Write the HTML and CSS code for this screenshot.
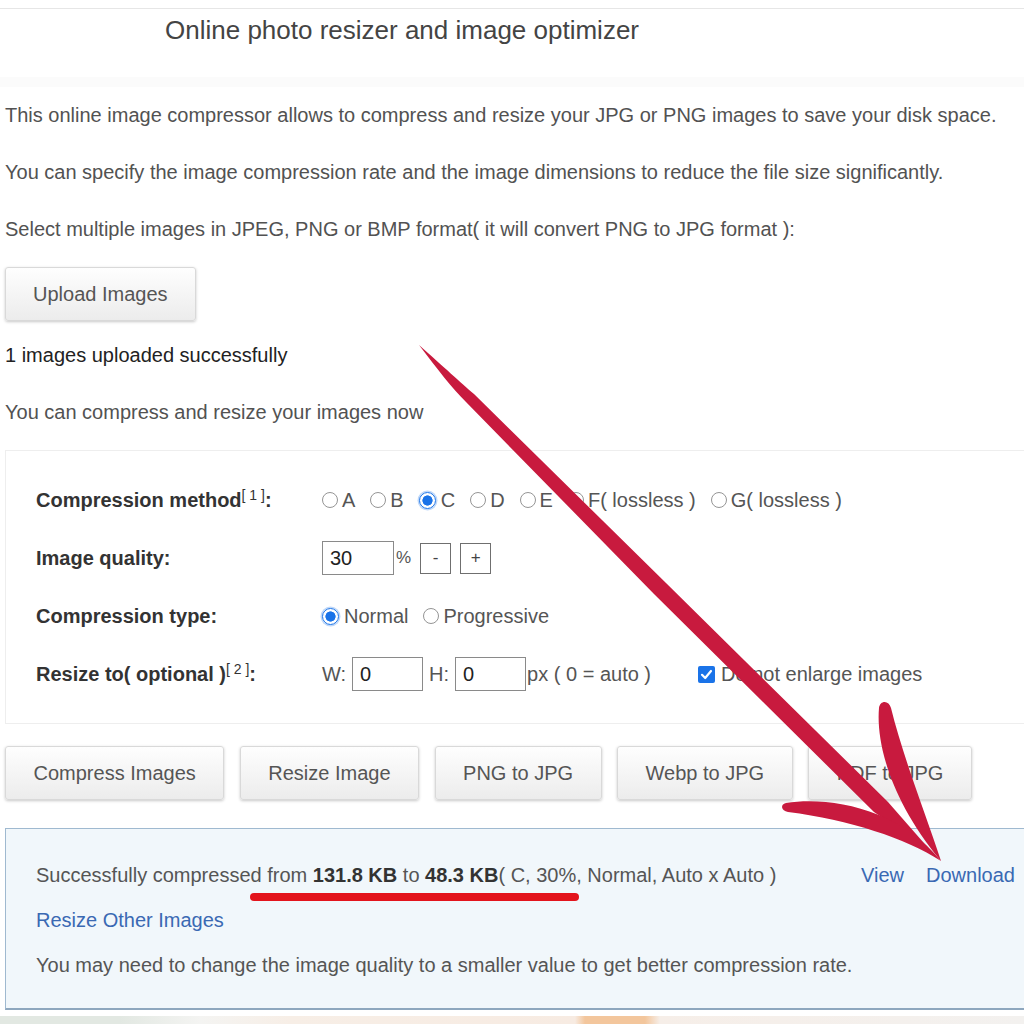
FILE: index.html
```html
<!DOCTYPE html>
<html lang="en">
<head>
<meta charset="utf-8">
<title>Online photo resizer and image optimizer</title>
<link rel="stylesheet" href="styles.css">
</head>
<body>
<header class="hdr">
  <h1>Online photo resizer and image optimizer</h1>
</header>
<main class="content">
  <p class="intro">This online image compressor allows to compress and resize your JPG or PNG images to save your disk space.</p>
  <p class="intro">You can specify the image compression rate and the image dimensions to reduce the file size significantly.</p>
  <p class="intro last">Select multiple images in JPEG, PNG or BMP format( it will convert PNG to JPG format ):</p>
  <button class="btn upload">Upload Images</button>
  <p class="status">1 images uploaded successfully</p>
  <p class="note">You can compress and resize your images now</p>

  <section class="panel">
    <div class="lbl">Compression method<sup>[ 1 ]</sup>:</div>
    <div class="ctl">
      <label class="opt"><input type="radio" name="m">A</label>
      <label class="opt"><input type="radio" name="m">B</label>
      <label class="opt"><input type="radio" name="m" checked>C</label>
      <label class="opt"><input type="radio" name="m">D</label>
      <label class="opt"><input type="radio" name="m">E</label>
      <label class="opt"><input type="radio" name="m">F( lossless )</label>
      <label class="opt"><input type="radio" name="m">G( lossless )</label>
    </div>

    <div class="lbl">Image quality:</div>
    <div class="ctl">
      <input class="field q" type="text" value="30">
      <span class="pct">%</span>
      <button class="step">-</button>
      <button class="step plus">+</button>
    </div>

    <div class="lbl">Compression type:</div>
    <div class="ctl">
      <label class="opt"><input type="radio" name="t" checked>Normal</label>
      <label class="opt"><input type="radio" name="t">Progressive</label>
    </div>

    <div class="lbl">Resize to( optional )<sup>[ 2 ]</sup>:</div>
    <div class="ctl">
      <span class="dimlbl">W:</span>
      <input class="field dim" type="text" value="0">
      <span class="dimlbl">H:</span>
      <input class="field dim last" type="text" value="0">
      <span class="px">px ( 0 = auto )</span>
      <span class="cb"><svg viewBox="0 0 17 17" width="17" height="17"><path d="M4 8.8 L7.2 12 L13 5" fill="none" stroke="#fff" stroke-width="2.2" stroke-linecap="round" stroke-linejoin="round"/></svg></span>
      <span class="cbtext">Do not enlarge images</span>
    </div>
  </section>

  <div class="actions">
    <button class="btn">Compress Images</button>
    <button class="btn">Resize Image</button>
    <button class="btn">PNG to JPG</button>
    <button class="btn">Webp to JPG</button>
    <button class="btn">PDF to JPG</button>
  </div>

  <section class="result">
    <div class="rline">
      <span>Successfully compressed from <b>131.8 KB</b> to <b>48.3 KB</b>( C, 30%, Normal, Auto x Auto )</span>
      <span class="links"><a href="#">View</a><a href="#">Download</a></span>
    </div>
    <div class="rline"><a href="#">Resize Other Images</a></div>
    <div class="rline">You may need to change the image quality to a smaller value to get better compression rate.</div>
  </section>
</main>
<div class="footstrip"></div>

<svg class="annot" viewBox="0 0 1024 1024" width="1024" height="1024">
  <rect x="250" y="893" width="329" height="8" rx="4" fill="#e3141c"/>
  <path d="M419,345 C445,368 460,382 474,394 L666,583 L888,802 L930,850 L874,812 L654,594 L466,402 C452,388 438,370 419,345 Z" fill="#c81a3e"/>
  <path d="M786,803 C830,796 900,809 941,861 C905,838 850,820 788,812 C781,811 780,804 786,803 Z" fill="#c81a3e"/>
  <path d="M879,708 C876,742 890,800 941,861 C927,818 903,757 891,708 C889,700 880,700 879,708 Z" fill="#c81a3e"/>
</svg>
</body>
</html>
```
FILE: styles.css
```css
html, body {
  margin: 0;
  padding: 0;
}
body {
  width: 1024px;
  height: 1024px;
  overflow: hidden;
  position: relative;
  background: #fff;
  font-family: "Liberation Sans", Arial, sans-serif;
  font-size: 20px;
  color: #525252;
}

.hdr {
  margin-top: 8px;
  height: 68px;
  border-top: 1px solid #e6e6e6;
  border-bottom: 10px solid #fbfbfb;
}
.hdr h1 {
  margin: 0;
  padding: 6px 0 0 165px;
  font-size: 26px;
  line-height: 30px;
  font-weight: normal;
  color: #444;
}

.content {
  padding: 16px 0 0 5px;
}
.content p {
  margin: 0;
  line-height: 24px;
}
.intro { margin-bottom: 33px !important; }
.intro.last { margin-bottom: 26px !important; }

.btn {
  display: inline-block;
  box-sizing: border-box;
  height: 54px;
  padding: 0 27.5px;
  font-family: inherit;
  font-size: 20px;
  color: #555;
  background: linear-gradient(#fefefe, #ececec);
  border: 1px solid #d9d9d9;
  border-radius: 3px;
  box-shadow: 0 1px 3px rgba(0, 0, 0, 0.22);
}
.upload {
  display: block;
  padding: 0 27px;
  margin-bottom: 22px;
}
.status {
  color: #222;
  margin-bottom: 33px !important;
}
.note {
  margin-bottom: 26px !important;
}

.panel {
  margin-right: -22px;
  margin-bottom: 22px;
  border: 1px solid #eeeeee;
  padding: 20px 0 20px 30px;
  display: grid;
  grid-template-columns: 286px 1fr;
  grid-auto-rows: 58px;
  align-items: center;
}
.lbl {
  font-weight: bold;
  color: #333;
}
.lbl sup {
  font-size: 14px;
  font-weight: normal;
  line-height: 0;
  vertical-align: 7px;
  color: #333;
}
.ctl {
  display: flex;
  align-items: center;
  color: #555;
}
.opt {
  display: inline-flex;
  align-items: center;
  margin-right: 15px;
}
.opt input {
  appearance: none;
  -webkit-appearance: none;
  box-sizing: border-box;
  width: 16px;
  height: 16px;
  margin: 0 4px 0 0;
  border: 1px solid #959595;
  border-radius: 50%;
  background: #fff;
}
.opt input:checked {
  width: 17px;
  height: 17px;
  margin-right: 5px;
  border-color: #1a73e8;
  background: radial-gradient(circle, #1a73e8 0 4.8px, #fff 5.4px);
  box-shadow: 0 0 0 1.5px rgba(26, 115, 232, 0.28);
}

.field {
  box-sizing: border-box;
  height: 34px;
  border: 1px solid #8a8a8a;
  padding: 0 7px;
  font-family: inherit;
  font-size: 20px;
  color: #222;
  background: #fff;
}
.field.q { width: 72px; margin-right: 2px; }
.pct { font-size: 17px; margin-right: 9px; }
.step {
  box-sizing: border-box;
  width: 31px;
  height: 31px;
  padding: 0;
  border: 1px solid #6f6f6f;
  background: #fff;
  font-family: inherit;
  font-size: 17px;
  color: #444;
}
.step.plus { margin-left: 9px; }

.dimlbl { margin-right: 6px; }
.field.dim { width: 71px; margin-right: 6px; }
.field.dim.last { margin-right: 1px; }
.px { margin-right: 47px; }
.cb {
  display: inline-flex;
  width: 17px;
  height: 17px;
  border-radius: 2px;
  background: #1a73e8;
  margin-right: 6px;
}

.actions {
  display: flex;
  gap: 15.5px;
  margin-bottom: 28px;
}

.result {
  margin-right: -22px;
  box-sizing: border-box;
  height: 182px;
  border: 1px solid #9fb9d0;
  border-bottom: 2px solid #8ea7be;
  background: #f1f7fb;
  padding: 34px 30px 0 30px;
}
.rline {
  display: flex;
  line-height: 24px;
  margin-bottom: 21px;
  color: #555;
}
.rline b { color: #333; }
.rline a {
  color: #3a69b3;
  text-decoration: none;
}
.links {
  margin-left: auto;
  display: flex;
  gap: 22px;
}

.footstrip {
  margin-top: 6px;
  height: 8px;
  background: linear-gradient(to right,
    #e2e8e2 0, #e2e8e2 120px, #f4f4f2 200px, #f7eee6 290px, #f7ebe2 575px,
    #f3c69c 585px, #f3c69c 645px, #f6eee8 660px, #f3f1ef 1024px);
}

.annot {
  position: absolute;
  left: 0;
  top: 0;
  pointer-events: none;
}
```
